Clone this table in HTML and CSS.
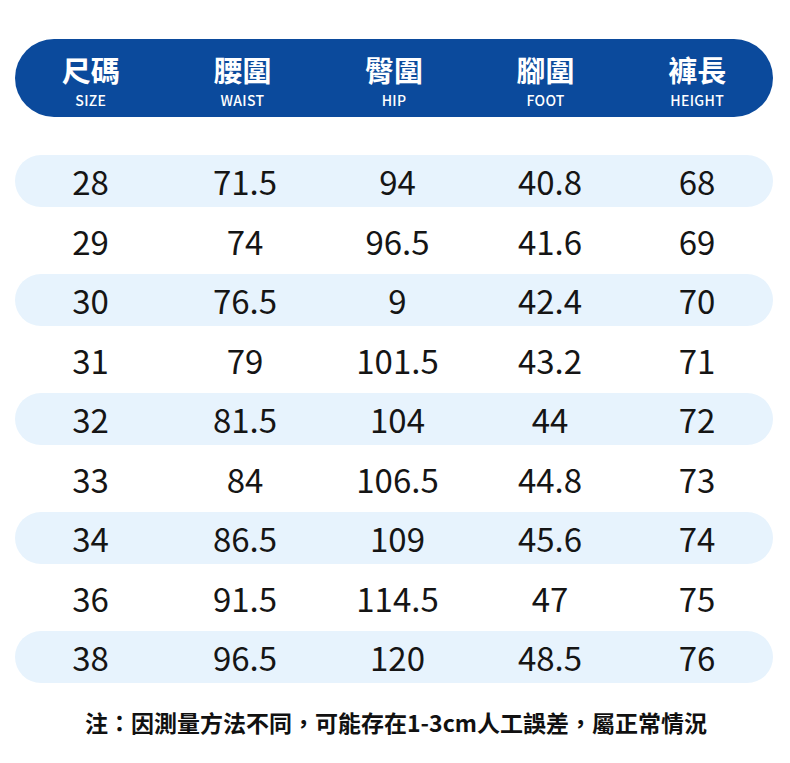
FILE: index.html
```html
<!DOCTYPE html>
<html lang="zh-Hant">
<head>
<meta charset="utf-8">
<title>尺碼表</title>
<link rel="stylesheet" href="styles.css">
</head>
<body>
<div class="page">
  <div class="head">
    <div class="hcell"><span class="zh">尺碼</span><span class="en">SIZE</span></div>
    <div class="hcell"><span class="zh">腰圍</span><span class="en">WAIST</span></div>
    <div class="hcell"><span class="zh">臀圍</span><span class="en">HIP</span></div>
    <div class="hcell"><span class="zh">腳圍</span><span class="en">FOOT</span></div>
    <div class="hcell"><span class="zh">褲長</span><span class="en">HEIGHT</span></div>
  </div>
  <div class="rows">
    <div class="row alt"><span>28</span><span>71.5</span><span>94</span><span>40.8</span><span>68</span></div>
    <div class="row"><span>29</span><span>74</span><span>96.5</span><span>41.6</span><span>69</span></div>
    <div class="row alt"><span>30</span><span>76.5</span><span>9</span><span>42.4</span><span>70</span></div>
    <div class="row"><span>31</span><span>79</span><span>101.5</span><span>43.2</span><span>71</span></div>
    <div class="row alt"><span>32</span><span>81.5</span><span>104</span><span>44</span><span>72</span></div>
    <div class="row"><span>33</span><span>84</span><span>106.5</span><span>44.8</span><span>73</span></div>
    <div class="row alt"><span>34</span><span>86.5</span><span>109</span><span>45.6</span><span>74</span></div>
    <div class="row"><span>36</span><span>91.5</span><span>114.5</span><span>47</span><span>75</span></div>
    <div class="row alt"><span>38</span><span>96.5</span><span>120</span><span>48.5</span><span>76</span></div>
  </div>
  <p class="note">注：因測量方法不同，可能存在1-3cm人工誤差，屬正常情況</p>
</div>
</body>
</html>
```

FILE: styles.css
```css
html, body {
  margin: 0;
  padding: 0;
  background: #ffffff;
}
body {
  font-family: "Noto Sans CJK TC", "Noto Sans", sans-serif;
  color: #151515;
}
.page {
  width: 758px;
  padding: 39px 17px 0 15px;
}
.head {
  height: 78px;
  box-sizing: border-box;
  border-radius: 39px;
  background: #0b4a9c;
  display: grid;
  grid-template-columns: repeat(5, 1fr);
  padding-top: 13px;
  color: #ffffff;
}
.hcell {
  display: flex;
  flex-direction: column;
  align-items: center;
  gap: 5px;
}
.zh {
  font-size: 29px;
  font-weight: 700;
  line-height: 34px;
}
.en {
  font-size: 14px;
  line-height: 18px;
  font-weight: 500;
  letter-spacing: 0.3px;
}
.rows {
  margin-top: 38px;
  display: flex;
  flex-direction: column;
  gap: 7.5px;
}
.row {
  height: 52px;
  border-radius: 26px;
  display: grid;
  grid-template-columns: 151px 158px 147px 158px 136px;
  align-items: center;
  text-align: center;
  font-size: 33px;
  line-height: 52px;
}
.row.alt {
  background: #e7f3fd;
}
.note {
  margin: 24px 0 0 0;
  text-align: center;
  font-size: 23px;
  line-height: 30px;
  font-weight: 700;
  color: #111111;
  padding-left: 4px;
}
```
